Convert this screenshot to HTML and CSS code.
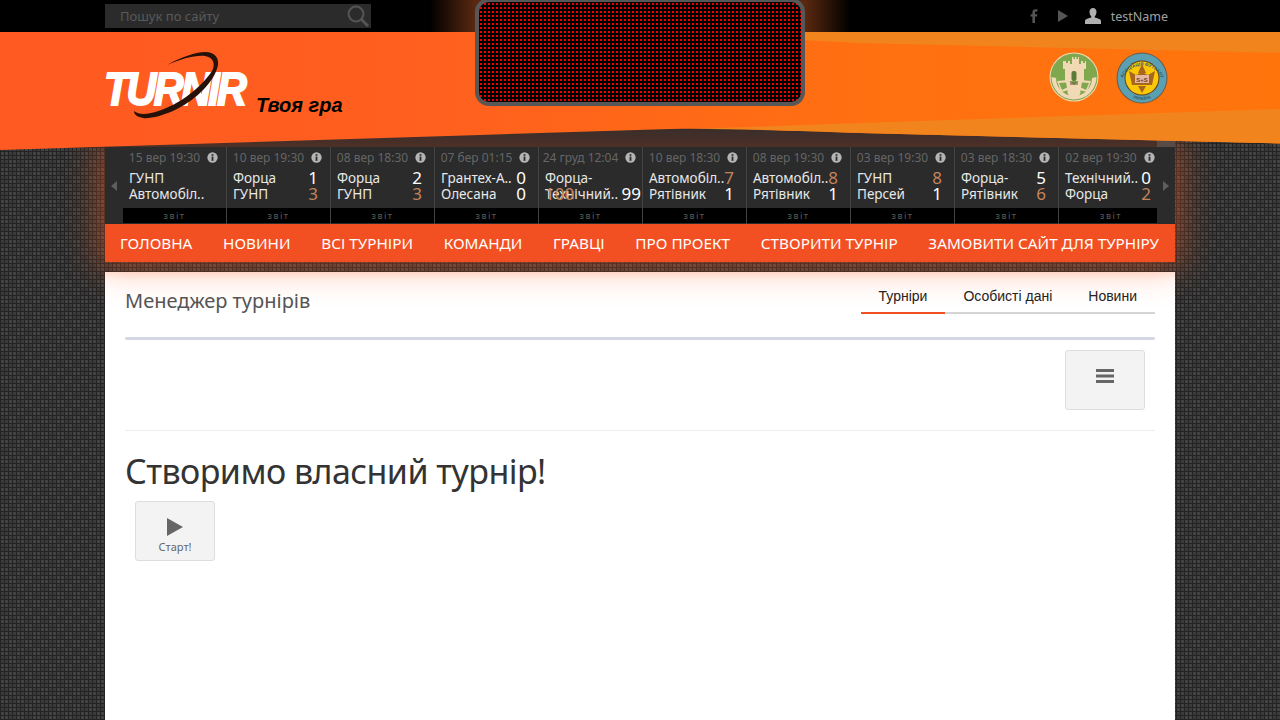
FILE: index.html
```html
<!DOCTYPE html>
<html lang="uk">
<head>
<meta charset="utf-8">
<title>Turnir</title>
<link rel="stylesheet" href="styles.css">
</head>
<body>
<svg class="defs" width="0" height="0" aria-hidden="true">
  <symbol id="info" viewBox="0 0 12 12">
    <circle cx="6" cy="6" r="5.6" fill="#b4b4b4"/>
    <rect x="5" y="5" width="2" height="4.6" fill="#2b2b2b"/>
    <rect x="5" y="2.4" width="2" height="1.8" fill="#2b2b2b"/>
  </symbol>
</svg>

<div class="topbar">
  <div class="wrap topbar-in">
    <div class="search">
      <span class="search-text">Пошук по сайту</span>
      <svg class="search-icon" viewBox="0 0 22 22" width="22" height="22"><circle cx="9" cy="9" r="7.4" fill="none" stroke="#555" stroke-width="2"/><path d="M14.5 14.5L21 21" stroke="#555" stroke-width="3"/></svg>
    </div>
    <div class="social">
      <svg class="ico-f" viewBox="0 0 8 14" width="8" height="14"><path d="M2.4 14V7.6H.6V5.2h1.8V3.4C2.4 1.2 3.6.2 5.4.2H7.400v2.400H6c-.8 0-1 .4-1 1v1.600h2.300L7 7.600H5V14z" fill="#555"/></svg>
      <svg class="ico-play" viewBox="0 0 10 12" width="10" height="12"><path d="M0 0L10 6L0 12z" fill="#555"/></svg>
      <svg class="ico-user" viewBox="0 0 16 16" width="16" height="16"><path d="M8 0c2.300 0 3.500 1.700 3.500 4 0 1.800-.8 3.400-1.700 4.200v1.300c2.500.8 6.200 1.500 6.200 3.500V16H0v-3c0-2 3.700-2.700 6.200-3.500V8.200C5.300 7.400 4.500 5.800 4.500 4 4.500 1.700 5.700 0 8 0z" fill="#b0b0b0"/></svg>
      <span class="username">testName</span>
    </div>
  </div>
</div>

<header class="brand">
  <svg class="brand-bg" viewBox="0 0 1280 120" width="1280" height="120" aria-hidden="true">
    <defs>
      <linearGradient id="og" x1="0" x2="1" y1="0" y2="0">
        <stop offset="0" stop-color="#ff5a22"/>
        <stop offset=".33" stop-color="#ff5f1f"/>
        <stop offset=".68" stop-color="#ff7011"/>
        <stop offset="1" stop-color="#ff750c"/>
      </linearGradient>
      <linearGradient id="br" x1="0" x2="0" y1="0" y2="1">
        <stop offset="0" stop-color="#392d2a"/>
        <stop offset="1" stop-color="#4c3027"/>
      </linearGradient>
    </defs>
    <rect x="105" y="95" width="1070" height="20" fill="url(#br)"/>
    <rect x="1157" y="108" width="18" height="7" fill="#5a4a46"/>
    <path d="M0 0H1280V111.500L860 101C780 98 720 96 670 97L480 103L0 118z" fill="url(#og)"/>
    <path d="M800 0H1280V21L860 11L800 8z" fill="#f2841e"/>
    <path d="M1280 77V111.500L860 101C800 99 740 97 690 97L860 91z" fill="#f2841e"/>
  </svg>
  <div class="led"></div>
  <div class="wrap brand-in">
    <div class="logo">
      <span class="logo-word">TURNIR</span>
      <svg class="logo-swoosh" viewBox="0 0 142 76" width="142" height="76" aria-hidden="true"><path d="M62 14C78 5 92 1 100 1C110 1 114 7 113 14C110 30 92 48 72 58C58 65 44 68 38 67C33 66 29 64 29 60C33 63 38 64 46 62C70 57 95 38 107 20C111 13 108 6 100 5C90 4 76 8 62 14z" fill="#261208"/></svg>
    </div>
    <span class="tagline">Твоя гра</span>
    <div class="badges">
      <svg class="badge" viewBox="0 0 50 50" width="50" height="50" aria-hidden="true">
        <circle cx="25" cy="25" r="24.500" fill="#f0d9b4"/>
        <circle cx="25" cy="25" r="23.500" fill="#7fa84e"/>
        <path d="M2.500 25A22.500 22.500 0 0 0 47.500 25L43 26A18 18 0 0 1 7 26z" fill="#f0d9b4"/>
        <path d="M14 9h3v2h2V9h2v3h2V5h1.500v2H26V5h1.500v2H29V5h1v7h2V9h2v2h2V9h1v8h-2v12H16V17h-2z" fill="#f0d9b4"/>
        <rect x="22.500" y="19" width="5" height="10" rx="2" fill="#5e7c39"/>
        <path d="M8 29L19 28L25 33L31 28L42 29L38 40L30 38H20L12 40z" fill="#f0d9b4"/>
        <path d="M10 31l7-.5 1 5-5 2.500zM40 31l-7-.5-1 5 5 2.500z" fill="#7fa84e"/>
        <circle cx="25" cy="40" r="6.500" fill="#f0d9b4"/>
        <path d="M21 30h8v3h-8z" fill="#6d5b3c" opacity=".55"/>
      </svg>
      <svg class="badge" viewBox="0 0 52 52" width="52" height="52" aria-hidden="true">
        <defs>
          <path id="ringTop" d="M5.500 30A21 21 0 0 1 46.500 30"/>
          <path id="ringBot" d="M8 39A22.500 22.500 0 0 0 44 39"/>
        </defs>
        <circle cx="26" cy="26" r="25.500" fill="#6b5a45"/>
        <circle cx="26" cy="26" r="24.500" fill="#5b9fb2"/>
        <circle cx="26" cy="26" r="17.500" fill="#5f3d1c"/>
        <circle cx="26" cy="26" r="16.500" fill="#fac806"/>
        <path d="M26 12L30 21H22zM13 19L20 23L26 20L32 23L39 19L36 33H16zM22 34H30L26 41z" fill="#a8651c"/>
        <rect x="19" y="23" width="14" height="8" fill="#e3b7a0"/>
        <text class="badge-s" x="26" y="30" text-anchor="middle">S+S</text>
        <text class="badge-ring"><textPath href="#ringTop" startOffset="50%" text-anchor="middle">АСОЦІАЦІЯ ФУТЗАЛУ</textPath></text>
        <text class="badge-ring"><textPath href="#ringBot" startOffset="50%" text-anchor="middle">УКРАЇНА</textPath></text>
      </svg>
    </div>
  </div>
</header>

<section class="wrap board">
  <div class="scores">
    <div class="arrow"><span class="tri tri-l"></span></div>
    <div class="matches">
      <article class="match"><div class="mdate"><span>15 вер 19:30</span><svg class="info"><use href="#info"/></svg></div><div class="mbody"><div class="row"><span class="team">ГУНП</span></div><div class="row"><span class="team">Автомобіл..</span></div></div><div class="report">звіт</div></article>
      <article class="match"><div class="mdate"><span>10 вер 19:30</span><svg class="info"><use href="#info"/></svg></div><div class="mbody"><div class="row"><span class="team">Форца</span><span class="score">1</span></div><div class="row"><span class="team">ГУНП</span><span class="score win">3</span></div></div><div class="report">звіт</div></article>
      <article class="match"><div class="mdate"><span>08 вер 18:30</span><svg class="info"><use href="#info"/></svg></div><div class="mbody"><div class="row"><span class="team">Форца</span><span class="score">2</span></div><div class="row"><span class="team">ГУНП</span><span class="score win">3</span></div></div><div class="report">звіт</div></article>
      <article class="match"><div class="mdate"><span>07 бер 01:15</span><svg class="info"><use href="#info"/></svg></div><div class="mbody"><div class="row"><span class="team">Грантех-А..</span><span class="score">0</span></div><div class="row"><span class="team">Олесана</span><span class="score">0</span></div></div><div class="report">звіт</div></article>
      <article class="match"><div class="mdate"><span>24 груд 12:04</span><svg class="info"><use href="#info"/></svg></div><div class="mbody"><div class="row"><span class="team">Форца-</span></div><div class="row"><span class="team">Технічний..</span><span class="score wide">99</span><span class="score win overlap">100</span></div></div><div class="report">звіт</div></article>
      <article class="match"><div class="mdate"><span>10 вер 18:30</span><svg class="info"><use href="#info"/></svg></div><div class="mbody"><div class="row"><span class="team">Автомобіл..</span><span class="score win">7</span></div><div class="row"><span class="team">Рятівник</span><span class="score">1</span></div></div><div class="report">звіт</div></article>
      <article class="match"><div class="mdate"><span>08 вер 19:30</span><svg class="info"><use href="#info"/></svg></div><div class="mbody"><div class="row"><span class="team">Автомобіл..</span><span class="score win">8</span></div><div class="row"><span class="team">Рятівник</span><span class="score">1</span></div></div><div class="report">звіт</div></article>
      <article class="match"><div class="mdate"><span>03 вер 19:30</span><svg class="info"><use href="#info"/></svg></div><div class="mbody"><div class="row"><span class="team">ГУНП</span><span class="score win">8</span></div><div class="row"><span class="team">Персей</span><span class="score">1</span></div></div><div class="report">звіт</div></article>
      <article class="match"><div class="mdate"><span>03 вер 18:30</span><svg class="info"><use href="#info"/></svg></div><div class="mbody"><div class="row"><span class="team">Форца-</span><span class="score">5</span></div><div class="row"><span class="team">Рятівник</span><span class="score win">6</span></div></div><div class="report">звіт</div></article>
      <article class="match"><div class="mdate"><span>02 вер 19:30</span><svg class="info"><use href="#info"/></svg></div><div class="mbody"><div class="row"><span class="team">Технічний..</span><span class="score">0</span></div><div class="row"><span class="team">Форца</span><span class="score win">2</span></div></div><div class="report">звіт</div></article>
    </div>
    <div class="arrow"><span class="tri tri-r"></span></div>
  </div>
  <nav class="menu">
    <a>ГОЛОВНА</a><a>НОВИНИ</a><a>ВСІ ТУРНІРИ</a><a>КОМАНДИ</a><a>ГРАВЦІ</a><a>ПРО ПРОЕКТ</a><a>СТВОРИТИ ТУРНІР</a><a>ЗАМОВИТИ САЙТ ДЛЯ ТУРНІРУ</a>
  </nav>
</section>

<main class="wrap content">
  <div class="head">
    <h2 class="title">Менеджер турнірів</h2>
    <div class="tabs"><a class="tab active">Турніри</a><a class="tab">Особисті дані</a><a class="tab">Новини</a></div>
  </div>
  <div class="rule"></div>
  <div class="toolbar">
    <button class="tool">
      <svg viewBox="0 0 18 14" width="18" height="14"><path d="M0 0H18V3H0zM0 5.500H18V8.500H0zM0 11H18V14H0z" fill="#666"/></svg>
    </button>
  </div>
  <h1 class="hero">Створимо власний турнір!</h1>
  <button class="tool start">
    <svg viewBox="0 0 16 18" width="16" height="18"><path d="M0 0L16 9L0 18z" fill="#666"/></svg>
    <span class="start-label">Старт!</span>
  </button>
</main>
</body>
</html>
```

FILE: styles.css
```css
* { box-sizing: border-box; }
html, body { margin: 0; height: 100%; overflow: hidden; }
body {
  display: flex;
  flex-direction: column;
  height: 720px;
  font-family: "Noto Sans", "Open Sans", sans-serif;
  background-color: #3a3a3a;
  background-image:
    repeating-linear-gradient(0deg, #232323 0 1px, transparent 1px 4px),
    repeating-linear-gradient(90deg, #232323 0 1px, transparent 1px 4px),
    repeating-conic-gradient(rgba(255, 255, 255, .04) 0 25%, transparent 0 50%);
  background-size: auto, auto, 16px 16px;
}
.defs { position: absolute; }
.wrap { width: 1070px; margin: 0 auto; }

/* top bar */
.topbar {
  height: 32px;
  flex: none;
  background:
    linear-gradient(90deg, transparent 430px, #5a2810 475px, #5a2810 805px, transparent 850px),
    #000;
}
.topbar-in { display: flex; justify-content: space-between; align-items: center; height: 32px; }
.search {
  width: 266px;
  height: 24px;
  background: #2b2b2b;
  display: flex;
  align-items: center;
  justify-content: space-between;
  padding: 0 2px 0 15px;
}
.search-text { font-size: 13px; color: #5a5a5a; }
.social { display: flex; align-items: center; padding-right: 7px; }
.ico-f { margin-right: 20px; }
.ico-play { margin-right: 17px; }
.ico-user { margin-right: 10px; }
.username { font-size: 12.500px; color: #a0a0a0; }

/* brand header */
.brand { position: relative; height: 115px; flex: none; z-index: 2; }
.brand-bg { position: absolute; left: 0; top: 0; }
.led {
  position: absolute;
  left: 475px;
  top: -34px;
  width: 330px;
  height: 108px;
  border: 4px solid #575757;
  border-radius: 14px;
  background-color: #000;
  background-image: radial-gradient(circle at 2px 2px, #f00000 0 .7px, #000 1.2px);
  background-size: 4px 4px;
}
.brand-in { position: relative; display: flex; height: 115px; }
.logo { position: relative; width: 142px; height: 76px; margin-top: 19px; }
.logo-word {
  display: block;
  margin: 15px 0 0 -1px;
  font-family: "Liberation Sans", Arial, sans-serif;
  font-size: 46px;
  line-height: 46px;
  font-weight: 700;
  font-style: italic;
  letter-spacing: -3px;
  color: #fff;
  -webkit-text-stroke: 1.800px #fff;
  transform: scaleX(.9);
  transform-origin: left center;
}
.logo-swoosh { position: absolute; left: 0; top: 0; }
.tagline {
  margin: 61px 0 0 9px;
  font-family: "Liberation Sans", Arial, sans-serif;
  font-size: 20px;
  line-height: 24px;
  font-weight: 700;
  font-style: italic;
  color: #000;
}
.badges { margin-left: auto; display: flex; align-items: flex-start; gap: 17px; padding: 20px 7px 0 0; }
.badge { display: block; }
.badge-s { font: 700 6px "Liberation Sans", sans-serif; fill: #6e3b1c; }
.badge-ring { font: 700 4.500px "Liberation Sans", sans-serif; fill: #2f5f6e; }

/* score board */
.board { flex: none; position: relative; z-index: 1; box-shadow: 0 0 32px 6px rgba(255, 90, 30, .45); }
.scores { display: flex; height: 77px; background: #2b2b2b; }
.arrow { width: 18px; flex: none; display: flex; align-items: center; justify-content: center; }
.tri { width: 0; height: 0; border-style: solid; border-color: transparent; margin-top: 1px; }
.tri-l { border-width: 5px 6px 5px 0; border-right-color: #5e5e5e; }
.tri-r { border-width: 5px 0 5px 6px; border-left-color: #5e5e5e; }
.matches { display: flex; width: 1034px; flex: none; overflow: hidden; }
.match { width: 104px; flex: none; display: flex; flex-direction: column; border-right: 1px solid #444; }
.match:last-child { border-right: 0; }
.mdate {
  height: 20px;
  padding-right: 2px;
  display: flex;
  align-items: center;
  justify-content: center;
  gap: 7px;
  font-size: 12px;
  color: #666;
  white-space: nowrap;
}
.info { width: 11px; height: 11px; flex: none; }
.mbody { height: 41px; padding: 3px 0 0 6px; }
.row { position: relative; display: flex; height: 16px; line-height: 16px; align-items: center; }
.team { font-size: 13.500px; color: #e8e8e8; white-space: nowrap; flex: none; }
.score { margin-left: auto; padding-right: 12px; font-size: 17px; color: #fff; flex: none; }
.score.win { color: #c5835c; }
.score.wide { padding-right: 2px; margin-right: -1px; }
.score.overlap { position: absolute; left: 0; top: 0; padding: 0; margin: 0; }
.report {
  height: 15px;
  background: #000;
  color: #5c5c5c;
  font-size: 9px;
  line-height: 15px;
  letter-spacing: 1.500px;
  text-align: center;
}
.menu {
  display: flex;
  justify-content: space-between;
  height: 38px;
  padding: 0 16px 0 15px;
  background: #f25022;
  align-items: center;
  font-size: 15.300px;
  color: #fff;
  white-space: nowrap;
}

/* main content */
.content {
  flex: 1;
  margin-top: 10px;
  padding: 0 20px;
  background: linear-gradient(#fff3ee, #fff 8px);
}
.head { display: flex; justify-content: space-between; height: 65px; }
.title { margin: 15px 0 0; font-size: 20px; line-height: 27px; font-weight: 400; color: #555; }
.tabs { display: flex; margin-top: 9px; height: 33px; border-bottom: 2px solid #d5d5d5; font-family: "Liberation Sans", Arial, sans-serif; font-size: 14px; color: #222; }
.tab { padding: 7px 18px 0; height: 33px; }
.tab.active { border-bottom: 2px solid #f25022; }
.rule { height: 3px; background: #d5d7e2; border-radius: 2px; }
.toolbar { display: flex; justify-content: flex-end; height: 91px; padding: 10px 10px 0 0; border-bottom: 1px solid #eee; }
.tool {
  width: 80px;
  height: 60px;
  padding: 0;
  background: #f3f3f3;
  border: 1px solid #ddd;
  border-radius: 3px;
  display: flex;
  flex-direction: column;
  align-items: center;
}
.toolbar .tool { padding-top: 18px; }
.hero { margin: 19px 0 9px; font-size: 34px; line-height: 42px; font-weight: 400; letter-spacing: -.55px; color: #333; }
.start { margin-left: 10px; padding-top: 16px; }
.start-label { margin-top: 3px; font-size: 11px; line-height: 15px; color: #666; font-family: "Noto Sans", sans-serif; }
```
